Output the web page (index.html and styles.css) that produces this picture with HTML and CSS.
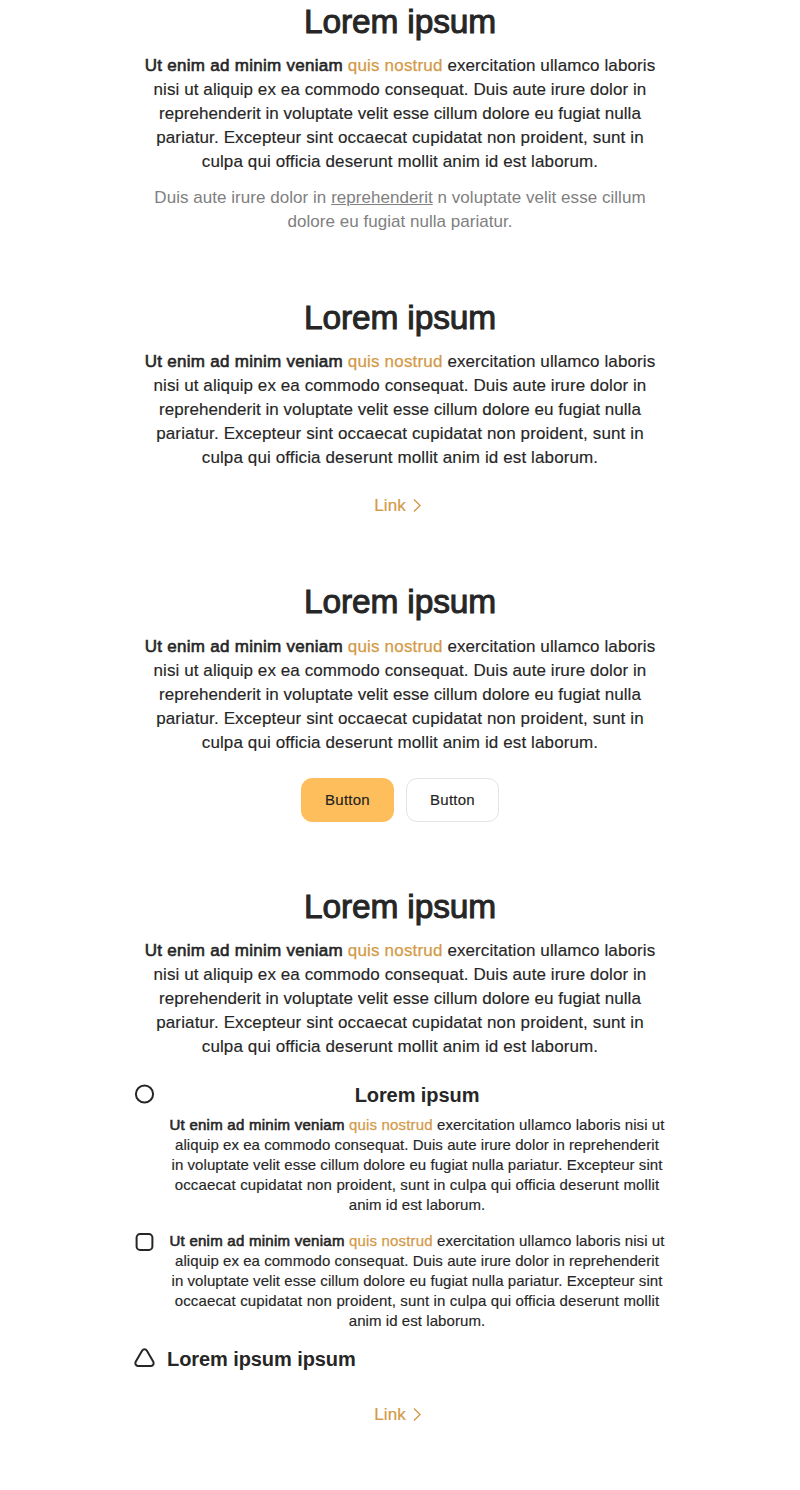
FILE: index.html
```html
<!DOCTYPE html>
<html lang="en">
<head><meta charset="utf-8"><title>Lorem ipsum</title><link rel="stylesheet" href="styles.css"></head>
<body>
<main class="page">
<section class="block note-block">
<h1 class="title">Lorem ipsum</h1>
<p class="copy"><span class="line a"><b>Ut enim ad minim veniam</b> <a class="accent">quis nostrud</a> exercitation ullamco laboris</span> <span class="line b">nisi ut aliquip ex ea commodo consequat. Duis aute irure dolor in</span> <span class="line c">reprehenderit in voluptate velit esse cillum dolore eu fugiat nulla</span> <span class="line d">pariatur. Excepteur sint occaecat cupidatat non proident, sunt in</span> <span class="line e">culpa qui officia deserunt mollit anim id est laborum.</span></p>
<p class="note"><span class="line n1">Duis aute irure dolor in <u>reprehenderit</u> n voluptate velit esse cillum</span> <span class="line n2">dolore eu fugiat nulla pariatur.</span></p>
</section>
<section class="block link-block">
<h2 class="title">Lorem ipsum</h2>
<p class="copy"><span class="line a"><b>Ut enim ad minim veniam</b> <a class="accent">quis nostrud</a> exercitation ullamco laboris</span> <span class="line b">nisi ut aliquip ex ea commodo consequat. Duis aute irure dolor in</span> <span class="line c">reprehenderit in voluptate velit esse cillum dolore eu fugiat nulla</span> <span class="line d">pariatur. Excepteur sint occaecat cupidatat non proident, sunt in</span> <span class="line e">culpa qui officia deserunt mollit anim id est laborum.</span></p>
<a class="more">Link<svg class="chevron" viewBox="0 0 10 16"><path d="M2 1.5l6 6-6 6"/></svg></a>
</section>
<section class="block button-block">
<h2 class="title">Lorem ipsum</h2>
<p class="copy"><span class="line a"><b>Ut enim ad minim veniam</b> <a class="accent">quis nostrud</a> exercitation ullamco laboris</span> <span class="line b">nisi ut aliquip ex ea commodo consequat. Duis aute irure dolor in</span> <span class="line c">reprehenderit in voluptate velit esse cillum dolore eu fugiat nulla</span> <span class="line d">pariatur. Excepteur sint occaecat cupidatat non proident, sunt in</span> <span class="line e">culpa qui officia deserunt mollit anim id est laborum.</span></p>
<div class="buttons"><button class="button primary">Button</button><button class="button">Button</button></div>
</section>
<section class="block list-block">
<h2 class="title">Lorem ipsum</h2>
<p class="copy"><span class="line a"><b>Ut enim ad minim veniam</b> <a class="accent">quis nostrud</a> exercitation ullamco laboris</span> <span class="line b">nisi ut aliquip ex ea commodo consequat. Duis aute irure dolor in</span> <span class="line c">reprehenderit in voluptate velit esse cillum dolore eu fugiat nulla</span> <span class="line d">pariatur. Excepteur sint occaecat cupidatat non proident, sunt in</span> <span class="line e">culpa qui officia deserunt mollit anim id est laborum.</span></p>
<div class="list">
<div class="item"><svg class="icon" viewBox="0 0 24 24"><circle cx="11.5" cy="13" r="8.6"/></svg>
<div class="body"><h3 class="subtitle">Lorem ipsum</h3><p class="small"><span class="line sa"><b>Ut enim ad minim veniam</b> <a class="accent">quis nostrud</a> exercitation ullamco laboris nisi ut</span> <span class="line sb">aliquip ex ea commodo consequat. Duis aute irure dolor in reprehenderit</span> <span class="line sc">in voluptate velit esse cillum dolore eu fugiat nulla pariatur. Excepteur sint</span> <span class="line sd">occaecat cupidatat non proident, sunt in culpa qui officia deserunt mollit</span> <span class="line se">anim id est laborum.</span></p></div></div>
<div class="item"><svg class="icon" viewBox="0 0 24 24"><rect x="3.6" y="3.1" width="15.8" height="15.8" rx="3.5"/></svg>
<div class="body"><p class="small"><span class="line sa"><b>Ut enim ad minim veniam</b> <a class="accent">quis nostrud</a> exercitation ullamco laboris nisi ut</span> <span class="line sb">aliquip ex ea commodo consequat. Duis aute irure dolor in reprehenderit</span> <span class="line sc">in voluptate velit esse cillum dolore eu fugiat nulla pariatur. Excepteur sint</span> <span class="line sd">occaecat cupidatat non proident, sunt in culpa qui officia deserunt mollit</span> <span class="line se">anim id est laborum.</span></p></div></div>
<div class="item last"><svg class="icon" viewBox="0 0 24 24"><path d="M9.2 5.5a2.7 2.7 0 0 1 4.6 0l6.5 11.3c1 1.9-.1 4.1-2.3 4.1h-13c-2.2 0-3.3-2.2-2.3-4.1z"/></svg>
<div class="body"><h3 class="subtitle">Lorem ipsum ipsum</h3></div></div>
</div>
<a class="more">Link<svg class="chevron" viewBox="0 0 10 16"><path d="M2 1.5l6 6-6 6"/></svg></a>
</section>
</main>
</body></html>
```
FILE: styles.css
```css
body{margin:0;font-family:"Liberation Sans",Arial,sans-serif;background:#fff;color:#262626}
.page{width:534px;height:1490px;margin:0 auto;text-align:center}
.block{display:flex;flex-direction:column;align-items:center}
.title{margin:0;padding-top:1px;font-size:33.5px;line-height:42px;font-weight:400;letter-spacing:-.15px;-webkit-text-stroke:1px}
.copy{margin:11px 0 0;font-size:17px;line-height:24px}
.note{margin:12px 0 0;font-size:17px;line-height:24px}
.button-block .copy{margin-top:12px}
.note-block,.link-block{padding-bottom:62px}
.button-block{padding-bottom:63px}
.copy,.small,.button{-webkit-text-stroke:.15px}
.copy b,.small b{font-weight:400;-webkit-text-stroke:.6px}
.copy b{letter-spacing:.28px}
.line{display:block;white-space:nowrap}
.a{letter-spacing:.1px}
.b{letter-spacing:.08px}
.c{letter-spacing:.04px}
.d{letter-spacing:.13px}
.e{letter-spacing:.12px}
.note{color:#808080}
.n1{letter-spacing:.04px}
.n2{letter-spacing:.03px}
.note u{text-decoration-thickness:1px;text-underline-offset:1px}
.accent,.more{color:#d39a48}
.accent{-webkit-text-stroke:.25px;letter-spacing:.18px}
.more{display:flex;align-items:center;gap:6px;margin:24px 4px 0 0;font-size:17px;line-height:24px;letter-spacing:.1px;-webkit-text-stroke:.2px}
.chevron{width:10px;height:16px;fill:none;stroke:currentColor;stroke-width:1.4}
.buttons{display:flex;gap:12px;margin-top:23px}
.button{width:93px;height:44px;padding:0 0 1px;border:1px solid #e4e4e4;border-radius:11px;background:#fff;color:#222;font:15px "Liberation Sans",Arial,sans-serif;letter-spacing:.25px}
.primary{border-color:#ffbe5c;background:#ffbe5c}
.list{display:flex;flex-direction:column;gap:16px;width:535px;margin-top:22px}
.item{display:flex;gap:11px}
.item:last-child{margin-top:-2px}
.icon{flex:none;width:24px;height:24px;fill:none;stroke:#262626;stroke-width:2}
.body{width:500px;margin-left:-.5px}
.subtitle{margin:0;font-size:20px;line-height:28px;letter-spacing:-.08px}
.small{margin:0;font-size:15px;line-height:20px}
.small b{letter-spacing:.26px}
.sa{letter-spacing:.09px}
.sb{letter-spacing:.05px}
.sc{letter-spacing:.05px}
.sd{letter-spacing:.14px}
.se{letter-spacing:.07px}
.subtitle + .small{margin-top:6px}
.last{text-align:left}
.list + .more{margin-top:30px}
```
